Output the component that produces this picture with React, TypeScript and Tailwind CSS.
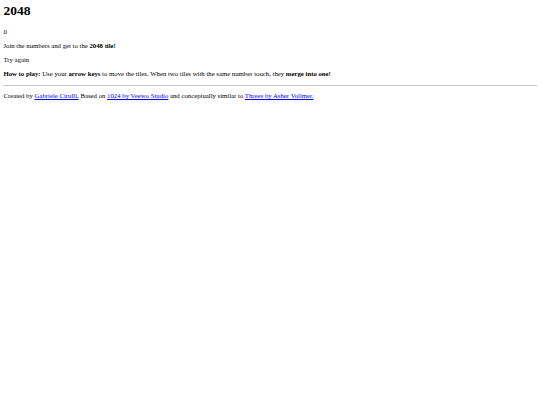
export default function App() {
  return (
    <div className="min-h-screen bg-white px-[3.4px] pt-[3.2px] font-['Liberation_Serif',serif] text-[6.75px] leading-[normal] text-black">
      <h1 className="mb-[9px] font-['Liberation_Serif',serif] text-[13.5px] font-bold leading-[normal]">2048</h1>
      <p className="mb-[6.75px]">0</p>
      <p className="mb-[6.9px]">
        Join the numbers and get to the <strong className="font-bold">2048 tile!</strong>
      </p>
      <p className="mb-[6.9px]">Try again</p>
      <p>
        <strong className="font-bold">How to play:</strong> Use your{" "}
        <strong className="font-bold">arrow keys</strong> to move the tiles. When two tiles with the
        same number touch, they <strong className="font-bold">merge into one!</strong>
      </p>
      <hr className="mb-[6.6px] mt-[7.8px] h-px border-0 bg-[#c4c4c4]" />
      <p>
        Created by{" "}
        <a href="#" className="text-[#0000ee] underline">
          Gabriele Cirulli.
        </a>{" "}
        Based on{" "}
        <a href="#" className="text-[#0000ee] underline">
          1024 by Veewo Studio
        </a>{" "}
        and conceptually similar to{" "}
        <a href="#" className="text-[#0000ee] underline">
          Threes by Asher Vollmer.
        </a>
      </p>
    </div>
  );
}
